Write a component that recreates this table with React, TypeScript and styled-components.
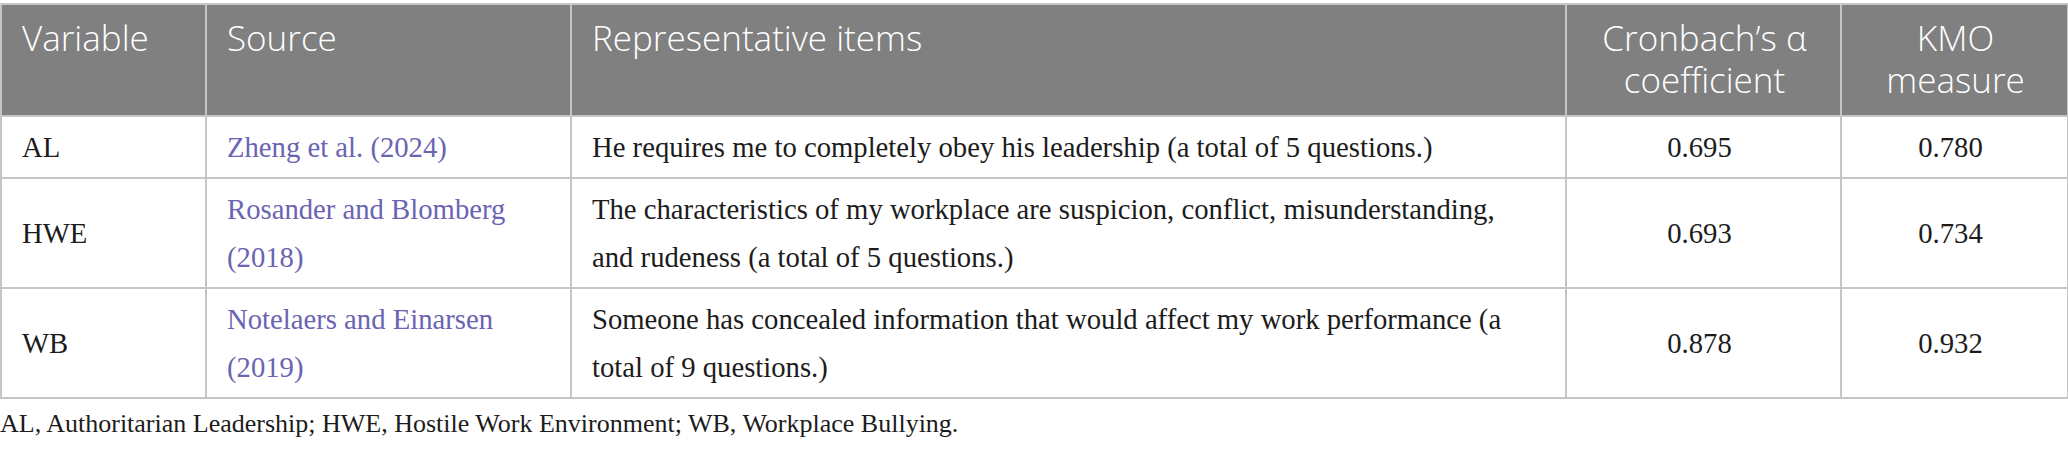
import React from 'react';
import styled, { createGlobalStyle } from 'styled-components';

const GlobalStyle = createGlobalStyle`
  html, body {
    margin: 0;
    padding: 0;
    background: #ffffff;
  }
`;

const Page = styled.div`
  padding-top: 3px;
  width: 2068px;
`;

const Table = styled.table`
  width: 2067px;
  border-collapse: collapse;
  table-layout: fixed;
`;

const HeadCell = styled.th<{ $align?: 'left' | 'center' }>`
  background: #7f807f;
  color: #ffffff;
  font-family: 'Open Sans', 'Noto Sans', sans-serif;
  font-weight: 300;
  font-size: 35px;
  line-height: 42px;
  text-align: ${(p) => p.$align || 'left'};
  vertical-align: top;
  padding: 12px 18px 14px 20px;
  border: 2px solid #c6c6c6;
`;

const Cell = styled.td<{ $align?: 'left' | 'center' }>`
  font-family: 'Liberation Serif', 'Times New Roman', serif;
  font-size: 28.7px;
  line-height: 48px;
  color: #1c1c1c;
  text-align: ${(p) => p.$align || 'left'};
  vertical-align: middle;
  padding: 6px 28px 6px 20px;
  border: 2px solid #c6c6c6;
`;

const SourceLink = styled.a`
  color: #6b64b2;
  text-decoration: none;
`;

const Footnote = styled.p`
  margin: 8px 0 0 0;
  font-family: 'Liberation Serif', 'Times New Roman', serif;
  font-size: 26px;
  line-height: 34px;
  color: #1c1c1c;
`;

type Row = {
  variable: string;
  source: string;
  item: string;
  alpha: string;
  kmo: string;
};

const rows: Row[] = [
  {
    variable: 'AL',
    source: 'Zheng et al. (2024)',
    item: 'He requires me to completely obey his leadership (a total of 5 questions.)',
    alpha: '0.695',
    kmo: '0.780',
  },
  {
    variable: 'HWE',
    source: 'Rosander and Blomberg (2018)',
    item: 'The characteristics of my workplace are suspicion, conflict, misunderstanding, and rudeness (a total of 5 questions.)',
    alpha: '0.693',
    kmo: '0.734',
  },
  {
    variable: 'WB',
    source: 'Notelaers and Einarsen (2019)',
    item: 'Someone has concealed information that would affect my work performance (a total of 9 questions.)',
    alpha: '0.878',
    kmo: '0.932',
  },
];

export default function App() {
  return (
    <Page>
      <GlobalStyle />
      <Table>
        <colgroup>
          <col style={{ width: 205 }} />
          <col style={{ width: 365 }} />
          <col style={{ width: 995 }} />
          <col style={{ width: 275 }} />
          <col style={{ width: 227 }} />
        </colgroup>
        <thead>
          <tr>
            <HeadCell>Variable</HeadCell>
            <HeadCell>Source</HeadCell>
            <HeadCell>Representative items</HeadCell>
            <HeadCell $align="center">Cronbach’s α coefficient</HeadCell>
            <HeadCell $align="center">KMO measure</HeadCell>
          </tr>
        </thead>
        <tbody>
          {rows.map((r) => (
            <tr key={r.variable}>
              <Cell>{r.variable}</Cell>
              <Cell>
                <SourceLink href="#">{r.source}</SourceLink>
              </Cell>
              <Cell>{r.item}</Cell>
              <Cell $align="center">{r.alpha}</Cell>
              <Cell $align="center">{r.kmo}</Cell>
            </tr>
          ))}
        </tbody>
      </Table>
      <Footnote>
        AL, Authoritarian Leadership; HWE, Hostile Work Environment; WB, Workplace Bullying.
      </Footnote>
    </Page>
  );
}
